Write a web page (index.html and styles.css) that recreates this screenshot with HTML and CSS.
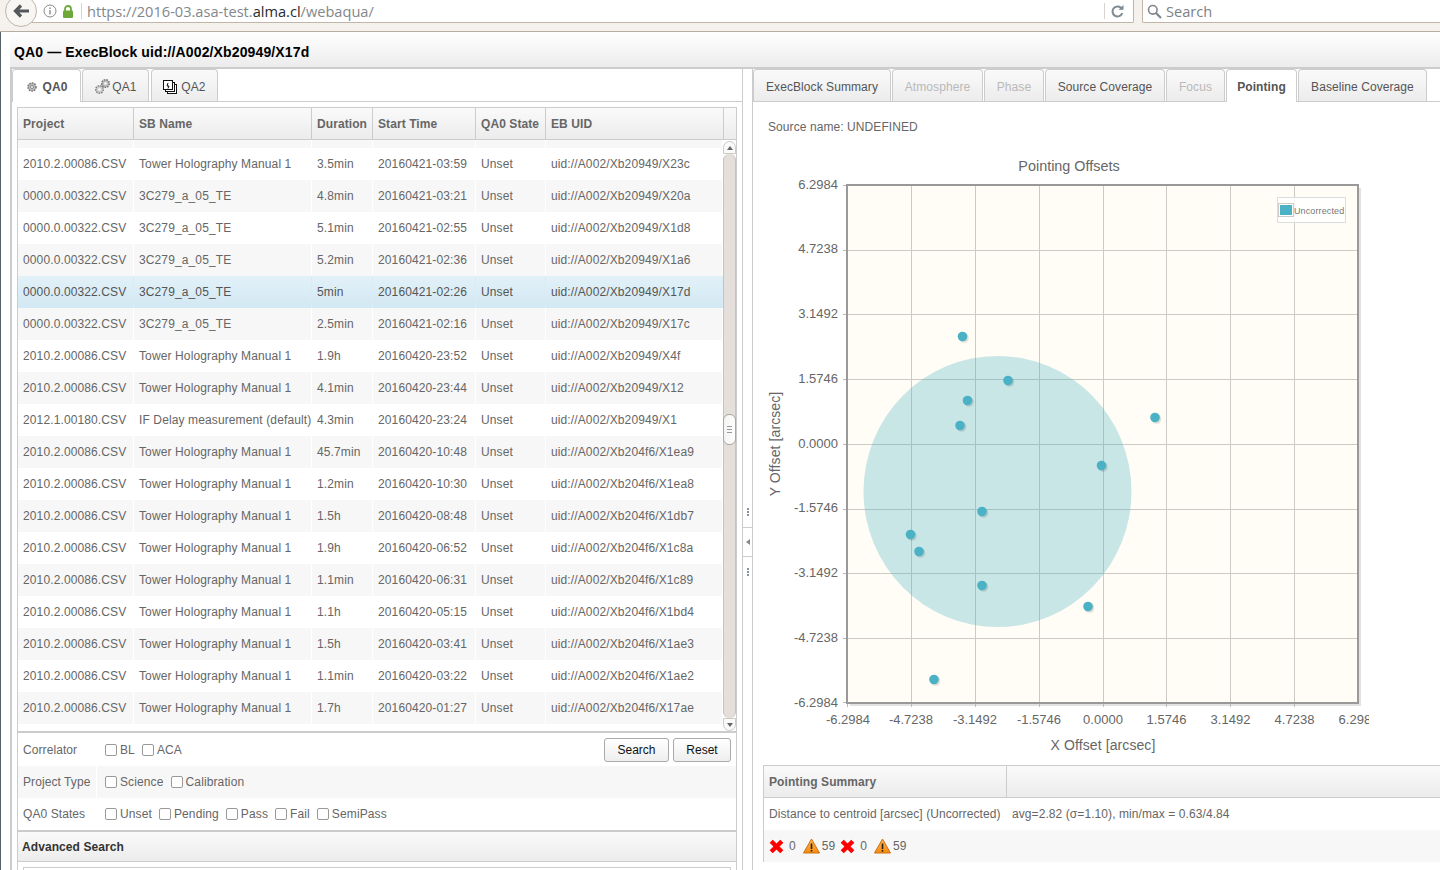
FILE: index.html
```html
<!DOCTYPE html>
<html lang="en">
<head>
<meta charset="utf-8">
<title>WebAQUA</title>
<link rel="stylesheet" href="styles.css">
</head>
<body>
<div class="browser">
  <div class="back"><svg width="16" height="14" viewBox="0 0 16 14"><path d="M8 1.500 2.500 7 8 12.500M3 7h13" fill="none" stroke="#55595c" stroke-width="3.200"/></svg></div>
  <div class="urlbar">
    <svg class="info" width="14" height="14" viewBox="0 0 14 14"><circle cx="7" cy="7" r="6" fill="none" stroke="#8a8a88"/><rect x="6.300" y="6" width="1.400" height="4.500" fill="#8a8a88"/><rect x="6.300" y="3.500" width="1.400" height="1.500" fill="#8a8a88"/></svg>
    <svg class="lock" width="12" height="13" viewBox="0 0 12 13"><path d="M3 6V4a3 3 0 0 1 6 0v2" fill="none" stroke="#6fa83a" stroke-width="1.800"/><rect x="1" y="5.500" width="10" height="7.500" rx="1" fill="#6fa83a"/></svg>
    <span class="divider"></span>
    <span class="url">https://2016-03.asa-test.<b>alma.cl</b>/webaqua/</span>
    <span class="divider end"></span>
    <svg class="reload" width="13" height="13" viewBox="0 0 13 13"><path d="M11 4.200A5 5 0 1 0 11.300 8" fill="none" stroke="#7e8a94" stroke-width="2"/><path d="M7.500 4.800h5V0z" fill="#7e8a94"/></svg>
  </div>
  <div class="searchbar">
    <svg width="15" height="15" viewBox="0 0 15 15"><circle cx="5.800" cy="5.800" r="4.300" fill="none" stroke="#80868c" stroke-width="1.600"/><path d="m9 9 5 5" stroke="#80868c" stroke-width="2.200"/></svg>
    <span>Search</span>
  </div>
</div>

<div class="page">
  <h1 class="title">QA0 — ExecBlock uid://A002/Xb20949/X17d</h1>
  <div class="split">
    <section class="left">
      <nav class="tabs">
        <a class="tab active qa0"><svg width="12" height="12" viewBox="0 0 12 12"><circle cx="6" cy="6" r="4" fill="#bbb" stroke="#777" stroke-width="1.500" stroke-dasharray="1.600 1"/><circle cx="6" cy="6" r="1.500" fill="#fff" stroke="#666" stroke-width=".7"/></svg>QA0</a>
        <a class="tab qa1"><svg width="17" height="17" viewBox="0 0 17 17"><circle cx="5.500" cy="11.500" r="3.800" fill="#ccc" stroke="#888" stroke-width="1.500" stroke-dasharray="1.600 1"/><circle cx="5.500" cy="11.500" r="1.300" fill="#fff"/><circle cx="11.500" cy="5.500" r="3.800" fill="#bbb" stroke="#777" stroke-width="1.500" stroke-dasharray="1.600 1"/><circle cx="11.500" cy="5.500" r="1.300" fill="#fff"/></svg>QA1</a>
        <a class="tab qa2"><svg width="14" height="14" viewBox="0 0 14 14"><rect x="4.500" y="4.500" width="9" height="9" fill="#fff" stroke="#111"/><rect x="2.500" y="2.500" width="9" height="9" fill="#fff" stroke="#111"/><rect x=".5" y=".5" width="9" height="9" fill="#fff" stroke="#111"/><path d="M5 3 4 6h2L5 8.500" fill="none" stroke="#111"/></svg>QA2</a>
      </nav>
      <div class="grid-frame">
        <div class="grid-head">
          <span class="c1">Project</span><span class="c2">SB Name</span><span class="c3">Duration</span><span class="c4">Start Time</span><span class="c5">QA0 State</span><span class="c6">EB UID</span><span class="c7"></span>
        </div>
        <div class="grid-body">
          <table class="rows">
            <colgroup><col class="w1"><col class="w2"><col class="w3"><col class="w4"><col class="w5"><col class="w6"></colgroup>
            <tbody>
              <tr class="spacer"><td></td><td></td><td></td><td></td><td></td><td></td></tr>
              <tr><td>2010.2.00086.CSV</td><td>Tower Holography Manual 1</td><td>3.5min</td><td>20160421-03:59</td><td>Unset</td><td>uid://A002/Xb20949/X23c</td></tr>
              <tr><td>0000.0.00322.CSV</td><td>3C279_a_05_TE</td><td>4.8min</td><td>20160421-03:21</td><td>Unset</td><td>uid://A002/Xb20949/X20a</td></tr>
              <tr><td>0000.0.00322.CSV</td><td>3C279_a_05_TE</td><td>5.1min</td><td>20160421-02:55</td><td>Unset</td><td>uid://A002/Xb20949/X1d8</td></tr>
              <tr><td>0000.0.00322.CSV</td><td>3C279_a_05_TE</td><td>5.2min</td><td>20160421-02:36</td><td>Unset</td><td>uid://A002/Xb20949/X1a6</td></tr>
              <tr class="selected"><td>0000.0.00322.CSV</td><td>3C279_a_05_TE</td><td>5min</td><td>20160421-02:26</td><td>Unset</td><td>uid://A002/Xb20949/X17d</td></tr>
              <tr><td>0000.0.00322.CSV</td><td>3C279_a_05_TE</td><td>2.5min</td><td>20160421-02:16</td><td>Unset</td><td>uid://A002/Xb20949/X17c</td></tr>
              <tr><td>2010.2.00086.CSV</td><td>Tower Holography Manual 1</td><td>1.9h</td><td>20160420-23:52</td><td>Unset</td><td>uid://A002/Xb20949/X4f</td></tr>
              <tr><td>2010.2.00086.CSV</td><td>Tower Holography Manual 1</td><td>4.1min</td><td>20160420-23:44</td><td>Unset</td><td>uid://A002/Xb20949/X12</td></tr>
              <tr><td>2012.1.00180.CSV</td><td>IF Delay measurement (default)</td><td>4.3min</td><td>20160420-23:24</td><td>Unset</td><td>uid://A002/Xb20949/X1</td></tr>
              <tr><td>2010.2.00086.CSV</td><td>Tower Holography Manual 1</td><td>45.7min</td><td>20160420-10:48</td><td>Unset</td><td>uid://A002/Xb204f6/X1ea9</td></tr>
              <tr><td>2010.2.00086.CSV</td><td>Tower Holography Manual 1</td><td>1.2min</td><td>20160420-10:30</td><td>Unset</td><td>uid://A002/Xb204f6/X1ea8</td></tr>
              <tr><td>2010.2.00086.CSV</td><td>Tower Holography Manual 1</td><td>1.5h</td><td>20160420-08:48</td><td>Unset</td><td>uid://A002/Xb204f6/X1db7</td></tr>
              <tr><td>2010.2.00086.CSV</td><td>Tower Holography Manual 1</td><td>1.9h</td><td>20160420-06:52</td><td>Unset</td><td>uid://A002/Xb204f6/X1c8a</td></tr>
              <tr><td>2010.2.00086.CSV</td><td>Tower Holography Manual 1</td><td>1.1min</td><td>20160420-06:31</td><td>Unset</td><td>uid://A002/Xb204f6/X1c89</td></tr>
              <tr><td>2010.2.00086.CSV</td><td>Tower Holography Manual 1</td><td>1.1h</td><td>20160420-05:15</td><td>Unset</td><td>uid://A002/Xb204f6/X1bd4</td></tr>
              <tr><td>2010.2.00086.CSV</td><td>Tower Holography Manual 1</td><td>1.5h</td><td>20160420-03:41</td><td>Unset</td><td>uid://A002/Xb204f6/X1ae3</td></tr>
              <tr><td>2010.2.00086.CSV</td><td>Tower Holography Manual 1</td><td>1.1min</td><td>20160420-03:22</td><td>Unset</td><td>uid://A002/Xb204f6/X1ae2</td></tr>
              <tr><td>2010.2.00086.CSV</td><td>Tower Holography Manual 1</td><td>1.7h</td><td>20160420-01:27</td><td>Unset</td><td>uid://A002/Xb204f6/X17ae</td></tr>
            </tbody>
          </table>
          <div class="scrollbar">
            <div class="sb-btn up"></div>
            <div class="sb-track"><div class="sb-thumb"><i></i><i></i><i></i></div></div>
            <div class="sb-btn down"></div>
          </div>
        </div>
        <form class="filters">
          <div class="f-row">
            <span class="f-label">Correlator</span>
            <label><input type="checkbox">BL</label><label><input type="checkbox">ACA</label>
            <span class="f-actions"><button type="button">Search</button><button type="button">Reset</button></span>
          </div>
          <div class="f-row grey">
            <span class="f-label">Project Type</span>
            <label><input type="checkbox">Science</label><label><input type="checkbox">Calibration</label>
          </div>
          <div class="f-row">
            <span class="f-label">QA0 States</span>
            <label><input type="checkbox">Unset</label><label><input type="checkbox">Pending</label><label><input type="checkbox">Pass</label><label><input type="checkbox">Fail</label><label><input type="checkbox">SemiPass</label>
          </div>
        </form>
        <div class="advanced">Advanced Search</div>
        <div class="adv-input"></div>
      </div>
    </section>

    <div class="splitter">
      <span class="grip"></span>
      <span class="collapse"><i></i></span>
      <span class="grip"></span>
    </div>

    <section class="right">
      <nav class="tabs rtabs">
        <a class="tab r1">ExecBlock Summary</a>
        <a class="tab r2 off">Atmosphere</a>
        <a class="tab r3 off">Phase</a>
        <a class="tab r4">Source Coverage</a>
        <a class="tab r5 off">Focus</a>
        <a class="tab active r6">Pointing</a>
        <a class="tab r7">Baseline Coverage</a>
      </nav>
      <p class="source">Source name: UNDEFINED</p>
      <svg class="chart" width="606" height="610" viewBox="763 150 606 610">
        <defs>
          <g id="pts">
            <circle cx="962.500" cy="336.500" r="4.800"/><circle cx="1008" cy="380.500" r="4.800"/><circle cx="967.500" cy="400.500" r="4.800"/><circle cx="960" cy="425.500" r="4.800"/><circle cx="1155" cy="417.500" r="4.800"/><circle cx="1101.500" cy="465.500" r="4.800"/><circle cx="982" cy="511.500" r="4.800"/><circle cx="910.500" cy="534.500" r="4.800"/><circle cx="919" cy="551.500" r="4.800"/><circle cx="982" cy="585.500" r="4.800"/><circle cx="1088" cy="606.500" r="4.800"/><circle cx="934" cy="679.500" r="4.800"/>
          </g>
        </defs>
        <text x="1069" y="171" class="t-title" text-anchor="middle">Pointing Offsets</text>
        <rect x="850" y="188" width="511" height="518" fill="#e2e2e2"/>
        <rect x="847" y="185" width="511" height="518" fill="#fffdf6"/>
        <g class="gridlines">
          <path d="M911.500 185V703M975.500 185V703M1039.500 185V703M1103.500 185V703M1166.500 185V703M1230.500 185V703M1294.500 185V703"/>
          <path d="M847 250.500H1358M847 314.500H1358M847 379.500H1358M847 444.500H1358M847 509.500H1358M847 573.500H1358M847 638.500H1358"/>
        </g>
        <path class="ticks" d="M843 185.500h4M843 250.500h4M843 314.500h4M843 379.500h4M843 444.500h4M843 509.500h4M843 573.500h4M843 638.500h4M843 702.500h4M847.500 703v4M911.500 703v4M975.500 703v4M1039.500 703v4M1103.500 703v4M1166.500 703v4M1230.500 703v4M1294.500 703v4"/>
        <rect x="847" y="185" width="511" height="518" class="frame"/>
        <ellipse cx="997.500" cy="491.500" rx="134" ry="135.500" fill="#4bb2c5" fill-opacity=".3"/>
        <use href="#pts" fill="#000" fill-opacity=".12" transform="translate(1.500 1.500)"/>
        <use href="#pts" fill="#4bb2c5"/>
        <g class="t-axis" text-anchor="end">
          <text x="838" y="189">6.2984</text><text x="838" y="253">4.7238</text><text x="838" y="318">3.1492</text><text x="838" y="383">1.5746</text><text x="838" y="448">0.0000</text><text x="838" y="512">-1.5746</text><text x="838" y="577">-3.1492</text><text x="838" y="642">-4.7238</text><text x="838" y="707">-6.2984</text>
        </g>
        <g class="t-axis" text-anchor="middle">
          <text x="848" y="724">-6.2984</text><text x="911" y="724">-4.7238</text><text x="975" y="724">-3.1492</text><text x="1039" y="724">-1.5746</text><text x="1103" y="724">0.0000</text><text x="1166.500" y="724">1.5746</text><text x="1230.500" y="724">3.1492</text><text x="1294.500" y="724">4.7238</text><text x="1358.500" y="724">6.2984</text>
        </g>
        <text x="1103" y="750" class="t-label" text-anchor="middle">X Offset [arcsec]</text>
        <text transform="translate(780 444) rotate(-90)" class="t-label" text-anchor="middle">Y Offset [arcsec]</text>
        <rect x="1277.500" y="197.500" width="68" height="25" fill="#fff" fill-opacity=".85" stroke="#ddd"/>
        <rect x="1278.500" y="203.500" width="15" height="13" fill="#fff" stroke="#ccc"/>
        <rect x="1280" y="205" width="12" height="10" fill="#4bb2c5"/>
        <text x="1294" y="214" class="t-legend">Uncorrected</text>
      </svg>
      <div class="summary">
        <div class="s-head"><span class="s-h1">Pointing Summary</span><span class="s-h2"></span></div>
        <div class="s-row"><span class="s-name">Distance to centroid [arcsec] (Uncorrected)</span><span>avg=2.82 (σ=1.10), min/max = 0.63/4.84</span></div>
        <div class="s-row grey icons">
          <svg class="ic-x" width="15" height="15" viewBox="0 0 15 15"><path d="M2.200 2.200 12.800 12.800M12.800 2.200 2.200 12.800" fill="none" stroke="#f00" stroke-width="4.400"/></svg><span class="num">0</span>
          <svg class="ic-w" width="17" height="16" viewBox="0 0 17 16"><defs><linearGradient id="warn" x1="0" y1="0" x2="0" y2="1"><stop offset="0" stop-color="#ffb84d"/><stop offset="1" stop-color="#f58a12"/></linearGradient></defs><path d="M8.500 1 16.500 15H.5z" fill="url(#warn)" stroke="#cf6f0c" stroke-linejoin="round"/><rect x="7.700" y="5.500" width="1.600" height="5.500" fill="#222"/><rect x="7.700" y="12" width="1.600" height="1.600" fill="#222"/></svg><span class="num n59">59</span>
          <svg class="ic-x" width="15" height="15" viewBox="0 0 15 15"><path d="M2.200 2.200 12.800 12.800M12.800 2.200 2.200 12.800" fill="none" stroke="#f00" stroke-width="4.400"/></svg><span class="num">0</span>
          <svg class="ic-w" width="17" height="16" viewBox="0 0 17 16"><path d="M8.500 1 16.500 15H.5z" fill="url(#warn)" stroke="#cf6f0c" stroke-linejoin="round"/><rect x="7.700" y="5.500" width="1.600" height="5.500" fill="#222"/><rect x="7.700" y="12" width="1.600" height="1.600" fill="#222"/></svg><span class="num n59">59</span>
        </div>
      </div>
    </section>
  </div>
</div>
</body>
</html>
```
FILE: styles.css
```css
* { box-sizing: border-box; }
html, body { margin: 0; height: 870px; overflow: hidden; }
body { background: #fff; font: 12px/1 "Liberation Sans", Arial, sans-serif; letter-spacing: .08px; color: #666; display: flex; flex-direction: column; }

.browser { position: relative; height: 32px; flex: none; background: #f5f2ee; border-bottom: 1px solid #b5aca2; display: flex; gap: 8px; padding-left: 28px; font-family: "Open Sans", sans-serif; letter-spacing: 0; }
.back { position: absolute; left: 5px; top: -5px; width: 32px; height: 32px; border-radius: 50%; background: #f8f6f3; border: 1px solid #c0b5a8; display: flex; align-items: center; justify-content: center; }
.urlbar { width: 1106px; flex: none; height: 23px; background: #fff; border: 1px solid #c0b5a8; border-top: 0; border-radius: 0 0 2px 2px; display: flex; align-items: center; padding-left: 14px; }
.info { margin-right: 5px; }
.lock { margin-right: 7px; }
.divider { width: 1px; height: 16px; background: #d8d4cf; margin-right: 5px; }
.url { font-size: 14.6px; color: #82878c; white-space: nowrap; flex: 1; }
.url b { font-weight: 400; color: #2a2a2a; }
.divider.end { margin: 0 6px 0 0; }
.reload { margin-right: 9px; }
.searchbar { flex: 1; height: 23px; background: #fff; border: 1px solid #c0b5a8; border-top: 0; border-right: 0; border-radius: 0 0 0 2px; display: flex; align-items: center; gap: 4px; padding-left: 4px; font-size: 14.6px; color: #7d8286; }

.page { flex: 1; min-height: 0; display: flex; flex-direction: column; border-left: 1px solid #5a6068; padding-left: 9px; }
.title { margin: 0; height: 37px; flex: none; padding: 12px 0 0 4px; font-size: 14px; font-weight: 700; line-height: 16px; letter-spacing: .13px; color: #000; background: linear-gradient(#fff, #ececec); border-bottom: 2px solid #ccc; }
.split { flex: 1; min-height: 0; display: flex; }

.left { width: 732px; flex: none; border-left: 2px solid #ccc; display: flex; flex-direction: column; overflow: hidden; }
.tabs { height: 33px; flex: none; display: flex; align-items: flex-end; border-bottom: 1px solid #ccc; padding-top: 1px; gap: 1px; }
.tab { height: 32px; padding-top: 2px; display: flex; align-items: center; justify-content: center; gap: 5px; background: linear-gradient(#fafafa, #ececec); border: 1px solid #ccc; border-bottom: 0; border-radius: 4px 4px 0 0; color: #555; font-size: 12px; white-space: nowrap; }
.tab.active { background: #fff; font-weight: 700; height: 33px; margin-bottom: -1px; }
.tab.off { color: #b9b9b9; }
.qa0 { width: 69px; gap: 5px; }
.qa1 { width: 67px; gap: 1px; }
.qa2 { width: 67px; margin-left: 1px; gap: 4px; }

.grid-frame { margin: 5px 0 0 5px; width: 720px; flex: 1; min-height: 0; border: 1px solid #ccc; border-bottom: 0; }
.grid-head { height: 32px; display: flex; background: linear-gradient(#fafafa, #ececec); border-bottom: 1px solid #ccc; font-weight: 700; color: #666; }
.grid-head span { display: flex; align-items: center; padding-left: 5px; border-right: 1px solid #ccc; }
.c1 { width: 116px; } .c2 { width: 178px; } .c3 { width: 61px; } .c4 { width: 103px; } .c5 { width: 70px; } .c6 { width: 178px; }
.c7 { flex: 1; border-right: 0 !important; }
.grid-body { height: 593px; display: flex; border-bottom: 2px solid #ccc; }
.rows { width: 705px; flex: none; border-collapse: separate; border-spacing: 0; table-layout: fixed; align-self: flex-start; }
.w1 { width: 116px; } .w2 { width: 178px; } .w3 { width: 61px; } .w4 { width: 103px; } .w5 { width: 70px; } .w6 { width: 177px; }
.rows td { height: 32px; padding: 0 0 0 5px; border-right: 1px solid #fff; white-space: nowrap; overflow: hidden; color: #666; letter-spacing: .12px; }
.rows tr.spacer td { height: 8px; background: #f7f7f7; }
.rows tr:nth-child(odd):not(.spacer) td { background: #f7f7f7; }
.rows tr.selected td { background: linear-gradient(#e3f1f8, #d2e8f3); border-right-color: #d9ecf5; color: #555; }

.scrollbar { width: 13px; flex: none; display: flex; flex-direction: column; background: #fff; padding-top: 1px; height: 591px; }
.sb-btn { height: 13px; flex: none; background: #fbfafa; border: 1px solid #cfc9c3; display: flex; align-items: center; justify-content: center; }
.sb-btn.up { border-radius: 7px 7px 0 0; }
.sb-btn.down { border-radius: 0 0 7px 7px; }
.sb-btn::after { content: ""; border: 3px solid transparent; }
.sb-btn.up::after { border-bottom: 4px solid #666; border-top: 0; }
.sb-btn.down::after { border-top: 4px solid #666; border-bottom: 0; }
.sb-track { flex: 1; background: #e4dfda; border-left: 1px solid #c9c3bd; border-right: 1px solid #c9c3bd; border-radius: 6px; padding-top: 260px; }
.sb-thumb { height: 31px; margin: 0 -1px; background: linear-gradient(90deg, #f4f3f2, #fff); border: 1px solid #aaa59f; border-radius: 6px; display: flex; flex-direction: column; align-items: center; justify-content: center; gap: 2px; }
.sb-thumb i { width: 5px; height: 1px; background: #999; }

.filters { height: 97px; }
.f-row { height: 32px; display: flex; align-items: center; }
.f-row:first-child { height: 33px; }
.f-row.grey { background: #f7f7f7; }
.f-label { width: 87px; padding-left: 5px; align-self: stretch; display: flex; align-items: center; }
.f-row.grey .f-label { width: 79px; border-right: 1px solid #fff; margin-right: 8px; }
.f-row label { display: flex; align-items: center; margin-right: 7px; color: #666; letter-spacing: .12px; }
.f-row input { appearance: none; width: 12px; height: 12px; margin: 0 3px 0 0; border: 1px solid #999; border-radius: 2px; background: #fff; }
.f-actions { margin-left: auto; margin-right: 5px; display: flex; gap: 4px; }
.f-actions button { height: 24px; padding: 0; width: 65px; font: 12px "Liberation Sans", sans-serif; color: #111; background: linear-gradient(#fff, #eee); border: 1px solid #aaa; border-radius: 3px; }
.f-actions button + button { width: 58px; }

.advanced { height: 32px; display: flex; align-items: center; padding-left: 4px; font-weight: 700; color: #333; background: linear-gradient(#fafafa, #ececec); border-top: 2px solid #ccc; border-bottom: 1px solid #ccc; }
.adv-input { margin: 5px 5px 0; height: 20px; border: 1px solid #ccc; }

.splitter { width: 11px; flex: none; border-left: 1px solid #ccc; border-right: 1px solid #ccc; display: flex; flex-direction: column; align-items: center; padding-top: 428px; }
.splitter span { width: 100%; display: flex; align-items: center; justify-content: center; }
.grip { height: 30px; }
.grip::after { content: ""; width: 2px; height: 8px; background: repeating-linear-gradient(#8a93a0 0 2px, transparent 2px 3px); }
.collapse { height: 30px; border-top: 1px solid #ccc; border-bottom: 1px solid #ccc; }
.collapse i { border: 3px solid transparent; border-right: 4px solid #888; border-left: 0; }

.right { flex: 1; min-width: 0; display: flex; flex-direction: column; overflow: hidden; }
.r1 { width: 138px; } .r2 { width: 91px; } .r3 { width: 60px; } .r4 { width: 120px; } .r5 { width: 59px; } .r6 { width: 71px; } .r7 { width: 129px; }
.source { margin: 0; height: 48px; flex: none; padding: 18px 0 0 15px; font-size: 12px; line-height: 14px; color: #666; }
.chart { flex: none; margin-left: 10px; display: block; letter-spacing: 0; }
.gridlines path { fill: none; stroke: #cccac5; stroke-width: 1; }
.ticks { fill: none; stroke: #bbb; stroke-width: 1; }
.frame { fill: none; stroke: #999; stroke-width: 2; }
.t-title { font: 14.4px "Liberation Sans", sans-serif; fill: #666; }
.t-axis text { font: 13px "Liberation Sans", sans-serif; fill: #666; }
.t-label { font: 14px "Liberation Sans", sans-serif; fill: #666; letter-spacing: .1px; }
.t-legend { font: 9px "Liberation Sans", sans-serif; fill: #777; letter-spacing: .12px; }

.summary { margin: 5px 0 0 10px; width: 690px; height: 97px; border: 1px solid #ccc; flex: none; }
.s-head { height: 32px; display: flex; background: linear-gradient(#fafafa, #ececec); border-bottom: 1px solid #ccc; font-weight: 700; }
.s-h1 { width: 243px; padding-left: 5px; display: flex; align-items: center; border-right: 1px solid #ccc; }
.s-row { height: 32px; display: flex; align-items: center; padding-left: 5px; }
.s-name { width: 243px; }
.s-row.grey { background: #f7f7f7; }
.num { margin: 0 7px 0 5px; }
.num.n59 { margin: 0 5px 0 2px; }
```
